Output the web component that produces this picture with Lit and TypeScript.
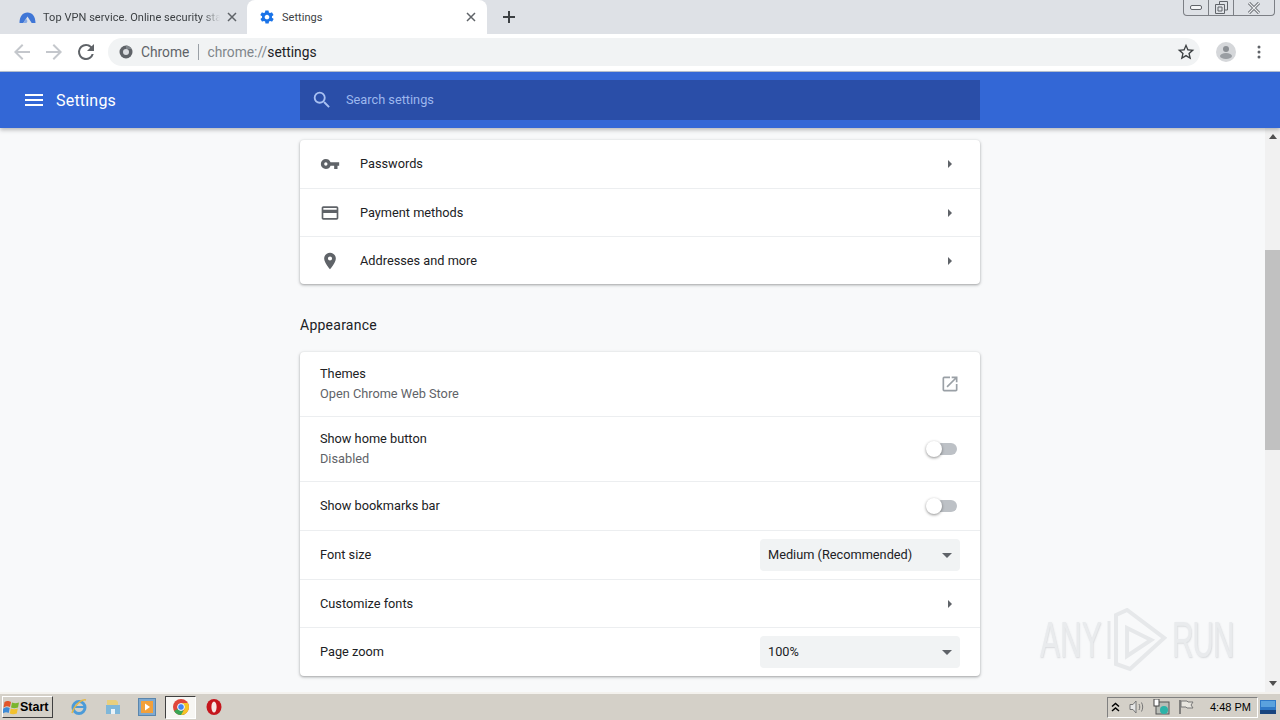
import { LitElement, html, css, svg } from 'lit';
import { customElement } from 'lit/decorators.js';

const icon = (body: unknown, size = 24, vb = 24) => html`<svg width=${size} height=${size} viewBox="0 0 ${vb} ${vb}">${body}</svg>`;

const GEAR = 'M19.4 13c0-.3.1-.6.1-1s0-.7-.1-1l2.1-1.6c.2-.2.2-.4.1-.6l-2-3.5c-.1-.2-.4-.3-.6-.2l-2.5 1c-.5-.4-1.100-.7-1.700-1l-.4-2.600c0-.2-.2-.4-.5-.4h-4c-.2 0-.4.2-.5.4l-.4 2.600c-.6.3-1.200.6-1.700 1l-2.500-1c-.2-.1-.5 0-.6.2l-2 3.500c-.1.2-.1.5.1.6L4.600 11c0 .3-.1.700-.1 1s0 .7.1 1l-2.100 1.600c-.2.2-.2.4-.1.6l2 3.500c.1.2.4.3.6.2l2.500-1c.5.4 1.100.7 1.700 1l.4 2.600c0 .2.2.4.5.4h4c.2 0 .5-.2.5-.4l.4-2.600c.6-.3 1.200-.6 1.700-1l2.500 1c.2.1.5 0 .6-.2l2-3.500c.1-.2.1-.5-.1-.6L19.400 13zM12 15.500c-1.900 0-3.500-1.600-3.500-3.500s1.600-3.500 3.500-3.500 3.500 1.600 3.500 3.500-1.600 3.500-3.500 3.500z';

@customElement('app-root')
export class AppRoot extends LitElement {
  static styles = css`
    :host {
      display: block;
      width: 1280px;
      height: 720px;
      overflow: hidden;
      position: relative;
      font-family: Roboto, 'Liberation Sans', sans-serif;
      font-size: 12.750px;
      color: #202124;
    }

    .page { display: flex; flex-direction: column; height: 720px; }

    /* tab strip */
    .tabstrip {
      height: 34px;
      background: #dee1e6;
      display: flex;
      align-items: flex-end;
      padding-left: 8px;
      position: relative;
      flex: none;
    }
    .tab {
      width: 235px;
      height: 34px;
      display: flex;
      align-items: center;
      font-size: 11px;
      letter-spacing: .05px;
      color: #3c4043;
      padding-left: 11px;
      box-sizing: border-box;
    }
    .tab.active {
      width: 240px;
      margin-left: 4px;
      background: #fff;
      border-radius: 8px 8px 0 0;
      padding-left: 12px;
    }
    .tab .title { margin: 0 7px; width: 177px; white-space: nowrap; -webkit-mask-image: linear-gradient(90deg, #000 90%, transparent); }
    .tab.active .title { margin: 0 0 0 7px; width: 184px; -webkit-mask-image: none; }
    .tab svg { flex: none; }
    .newtab { margin: 0 0 0 16px; align-self: center; display: flex; }
    .winctl {
      position: absolute;
      top: 0;
      left: 1183px;
      width: 92px;
      height: 16px;
      box-sizing: border-box;
      border: 1px solid #7c7f85;
      border-top: none;
      border-radius: 0 0 4px 4px;
      display: grid;
      grid-template-columns: 25px 25px 1fr;
    }
    .winctl div { display: flex; align-items: center; justify-content: center; border-right: 1px solid #7c7f85; }
    .winctl div:last-child { border-right: none; }

    /* toolbar */
    .toolbar {
      height: 36px;
      padding: 0 0 1px 10px;
      background: #fff;
      display: flex;
      align-items: center;
      flex: none;
      border-bottom: 1px solid #b9c3d3;
    }
    .navbtn { width: 24px; height: 24px; margin-right: 8px; display: flex; }
    .omnibox {
      width: 1092px;
      height: 28px;
      margin-left: 2px;
      border-radius: 14px;
      background: #f1f3f4;
      display: flex;
      align-items: center;
      box-sizing: border-box;
      padding-left: 11px;
      font-size: 13.800px;
      color: #5f6368;
    }
    .omnibox .secure { margin-right: 8px; }
    .omnibox .sep { width: 1px; height: 16px; background: #9aa0a6; margin: 0 8px 0 9px; }
    .omnibox .path { color: #80868b; }
    .omnibox .path b { font-weight: 400; color: #202124; }
    .omnibox .star { margin-left: auto; margin-right: 4px; display: flex; }
    .avatar { margin-left: 16px; display: flex; }
    .dots { margin-left: 21px; display: flex; }

    /* settings header */
    .header {
      height: 56px;
      background: #3367d6;
      display: grid;
      grid-template-columns: 300px 680px;
      align-items: center;
      color: #fff;
      flex: none;
      box-shadow: 0 2px 4px rgba(60, 64, 67, .35);
      position: relative;
      z-index: 1;
    }
    .brand { display: flex; align-items: center; padding-left: 22px; font-size: 16px; letter-spacing: .2px; gap: 10px; }
    .search {
      height: 40px;
      background: #2a4ea8;
      display: flex;
      align-items: center;
      padding-left: 11px;
      gap: 13px;
      color: #9db8ee;
      font-size: 12.750px;
    }
    .search span { padding-bottom: 2px; }

    /* content */
    .main { flex: 1; display: flex; min-height: 0; background: #f8f9fa; }
    .content { flex: 1; padding: 12px 0 0 300px; box-sizing: border-box; overflow: hidden; }
    .column { width: 680px; }
    .card {
      background: #fff;
      border-radius: 4px;
      box-shadow: 0 1px 2px rgba(60, 64, 67, .3), 0 1px 3px 1px rgba(60, 64, 67, .15);
    }
    .row {
      display: flex;
      align-items: center;
      padding: 0 20px;
      min-height: 47px;
      border-top: 1px solid #eceef0;
    }
    .row:first-child { border-top: none; min-height: 48px; }
    .nav .row:first-child { min-height: 47px; padding-bottom: 1px; }
    .row.tall { min-height: 48px; }
    .row.two { min-height: 64px; }
    .row.tall .grow, .row.two .grow { padding-bottom: 2px; }
    .row .ic { width: 20px; height: 20px; margin-right: 20px; display: flex; }
    .row .grow { flex: 1; }
    .sub { color: #5f6368; margin-top: 5px; }
    .section { font-size: 14px; color: #202124; letter-spacing: .25px; margin: 33px 0 18px; line-height: 17px; }
    .arrow { width: 0; height: 0; border-left: 4px solid #5f6368; border-top: 4px solid transparent; border-bottom: 4px solid transparent; margin-right: 8px; }
    .toggle { width: 32px; height: 12px; margin-right: 3px; position: relative; display: flex; justify-content: flex-end; }
    .toggle .track { width: 26px; height: 12px; border-radius: 6px; background: #bdc1c6; }
    .toggle .knob {
      position: absolute;
      left: 1px;
      top: -2px;
      width: 16px;
      height: 16px;
      border-radius: 50%;
      background: #fff;
      box-shadow: 0 1px 3px rgba(0, 0, 0, .45);
    }
    .select {
      width: 200px;
      height: 32px;
      background: #f1f3f4;
      border-radius: 4px;
      display: flex;
      align-items: center;
      justify-content: space-between;
      padding: 0 8px;
      box-sizing: border-box;
    }
    .select span { padding-bottom: 1px; }
    .select i { width: 0; height: 0; border-top: 5px solid #5f6368; border-left: 5px solid transparent; border-right: 5px solid transparent; }

    /* scrollbar */
    .scrollbar { width: 15px; background: #f1f1f1; display: flex; flex-direction: column; align-items: center; flex: none; }
    .scrollbar .up, .scrollbar .down { height: 17px; flex: none; display: flex; align-items: center; justify-content: center; }
    .scrollbar .up i { border-bottom: 5px solid #505050; border-left: 4px solid transparent; border-right: 4px solid transparent; }
    .scrollbar .down i { border-top: 5px solid #505050; border-left: 4px solid transparent; border-right: 4px solid transparent; }
    .scrollbar .thumb { width: 100%; height: 200px; background: #c1c1c1; margin-top: 105px; }
    .scrollbar .rest { flex: 1; }

    /* watermark */
    .watermark {
      position: absolute;
      left: 1040px;
      top: 608px;
      display: flex;
      align-items: center;
      font-family: 'Liberation Sans', sans-serif;
      font-size: 50px;
      line-height: 64px;
      color: #e9ebed;
      text-shadow: 1px 1px 2px rgba(120, 125, 130, .25);
      pointer-events: none;
      transform: scaleX(.6);
      transform-origin: left center;
      white-space: nowrap;
    }
    .watermark svg { margin: 0 8px 0 7px; }
    .watermark .run { letter-spacing: -2px; }

    /* taskbar */
    .taskbar {
      height: 28px;
      flex: none;
      background: #d4d0c8;
      border-top: 2px solid #f4f2ee;
      box-sizing: border-box;
      display: flex;
      align-items: center;
      font-family: 'Liberation Sans', sans-serif;
    }
    .start {
      margin-left: 2px;
      width: 51px;
      height: 22px;
      box-sizing: border-box;
      border: 1px solid;
      border-color: #fff #404040 #404040 #fff;
      display: flex;
      align-items: center;
      font-weight: 700;
      font-size: 12.500px;
      color: #000;
    }
    .task { display: flex; margin-left: 16px; }
    .task.first { margin-left: 17px; }
    .task.opera { margin-left: 10px; }
    .task.pressed {
      width: 31px;
      height: 23px;
      margin-left: 9px;
      background: #f7f6f3;
      box-sizing: border-box;
      border: 1px solid;
      border-color: #404040 #fff #fff #404040;
      align-items: center;
      justify-content: center;
    }
    .tray {
      margin-left: auto;
      width: 151px;
      height: 21px;
      box-sizing: border-box;
      border: 1px solid;
      border-color: #808080 #fff #fff #808080;
      display: flex;
      align-items: center;
      padding-left: 3px;
      gap: 8px;
      font-size: 11px;
      color: #000;
    }
    .tray .speaker { margin-left: 1px; }
    .tray .clock { margin-left: 8px; }
    .showdesk { margin-right: 2px; width: 20px; display: flex; justify-content: center; }
  `;

  private row(icon_: unknown, label: string) {
    return html`<div class="row">
      <span class="ic">${icon_}</span>
      <span class="grow">${label}</span>
      <span class="arrow"></span>
    </div>`;
  }

  private toggleRow(label: string, sub?: string) {
    return html`<div class="row tall ${sub ? 'two' : ''}">
      <div class="grow">
        <div>${label}</div>
        ${sub ? html`<div class="sub">${sub}</div>` : ''}
      </div>
      <div class="toggle"><div class="track"></div><div class="knob"></div></div>
    </div>`;
  }

  private selectRow(label: string, value: string) {
    return html`<div class="row tall">
      <span class="grow">${label}</span>
      <div class="select"><span>${value}</span><i></i></div>
    </div>`;
  }

  render() {
    const close = html`<svg width="10" height="10" viewBox="0 0 10 10"><path d="M1 1l8 8M9 1l-8 8" stroke="#5f6368" stroke-width="1.500"/></svg>`;
    return html`<div class="page">
      <div class="tabstrip">
        <div class="tab">
          <svg width="17" height="17" viewBox="0 0 17 17"><path d="M.5 14C.5 7.500 3.800 3.500 8.500 3.500S16.500 7.500 16.500 14h-3.800L8.500 7.500 4.300 14z" fill="#3f76d6"/><path d="M4.300 14L7 9.500l1.500 2.500-1 2z" fill="#86a9e4"/></svg>
          <span class="title">Top VPN service. Online security sta</span>
          ${close}
        </div>
        <div class="tab active">
          ${icon(svg`<path d=${GEAR} fill="#1a73e8"/>`, 16)}
          <span class="title">Settings</span>
          ${close}
        </div>
        <span class="newtab"><svg width="12" height="12" viewBox="0 0 12 12"><path d="M6 0v12M0 6h12" stroke="#3c4043" stroke-width="2"/></svg></span>
        <div class="winctl">
          <div><svg width="12" height="6" viewBox="0 0 12 6"><rect x=".5" y=".5" width="11" height="4" rx="1.500" fill="#f4f5f7" stroke="#60646a"/></svg></div>
          <div><svg width="13" height="13" viewBox="0 0 13 13"><path d="M4.500 3V.5h8V9H10M.5 3.500h9v9h-9zM3 6h4v4H3z" fill="none" stroke="#60646a"/></svg></div>
          <div><svg width="14" height="12" viewBox="0 0 14 12"><path d="M2 1l10 10M12 1L2 11" stroke="#60646a" stroke-width="3"/><path d="M2 1l10 10M12 1L2 11" stroke="#eceef0" stroke-width="1.200"/></svg></div>
        </div>
      </div>

      <div class="toolbar">
        <span class="navbtn">${icon(svg`<path d="M20 11H7.800l5.600-5.600L12 4l-8 8 8 8 1.400-1.400L7.800 13H20z" fill="#c4c7cc"/>`)}</span>
        <span class="navbtn">${icon(svg`<path d="M12 4l-1.400 1.400 5.600 5.600H4v2h12.200l-5.600 5.600L12 20l8-8z" fill="#c4c7cc"/>`)}</span>
        <span class="navbtn">${icon(svg`<path d="M17.650 6.350A7.960 7.960 0 0 0 12 4a8 8 0 1 0 7.730 10h-2.080A6 6 0 1 1 12 6c1.660 0 3.140.69 4.220 1.780L13 11h7V4z" fill="#5f6368"/>`)}</span>
        <div class="omnibox">
          <svg class="secure" width="14" height="14" viewBox="0 0 14 14"><circle cx="7" cy="7" r="6.500" fill="#5f6368"/><circle cx="7" cy="7" r="3" fill="#dadce0"/><path d="M7 .5A6.500 6.500 0 0 1 12.700 4H7z" fill="#80868b"/></svg>
          <span>Chrome</span>
          <span class="sep"></span>
          <span class="path">chrome://<b>settings</b></span>
          <span class="star">${icon(svg`<path d="M22 9.240l-7.190-.62L12 2 9.190 8.630 2 9.240l5.460 4.730L5.820 21 12 17.270 18.180 21l-1.630-7.030L22 9.240zM12 15.400l-3.760 2.270 1-4.280-3.320-2.880 4.380-.38L12 6.100l1.710 4.040 4.380.38-3.320 2.880 1 4.280L12 15.400z" fill="#3c4043"/>`, 20)}</span>
        </div>
        <span class="avatar"><svg width="20" height="20" viewBox="0 0 20 20"><circle cx="10" cy="10" r="10" fill="#d5d7da"/><circle cx="10" cy="7" r="3" fill="#8b8f94"/><ellipse cx="10" cy="14" rx="6" ry="3" fill="#9a9ea3"/></svg></span>
        <span class="dots"><svg width="4" height="14" viewBox="0 0 4 14"><circle cx="2" cy="2" r="1.500" fill="#5f6368"/><circle cx="2" cy="7" r="1.500" fill="#5f6368"/><circle cx="2" cy="12" r="1.500" fill="#5f6368"/></svg></span>
      </div>

      <div class="header">
        <div class="brand">
          ${icon(svg`<path d="M3 18h18v-2H3v2zm0-5h18v-2H3v2zm0-7v2h18V6H3z" fill="#fff"/>`)}
          <span>Settings</span>
        </div>
        <div class="search">
          ${icon(svg`<path d="M15.500 14h-.79l-.28-.27A6.470 6.470 0 0 0 16 9.500 6.500 6.500 0 1 0 9.500 16c1.610 0 3.090-.59 4.230-1.570l.27.28v.79l5 4.990L20.490 19l-4.990-5zm-6 0C7.010 14 5 11.990 5 9.500S7.010 5 9.500 5 14 7.010 14 9.500 11.990 14 9.500 14z" fill="#a9c1f2"/>`, 22)}
          <span>Search settings</span>
        </div>
      </div>

      <div class="main">
        <div class="content">
          <div class="column">
            <div class="card nav">
              ${this.row(icon(svg`<path d="M12.650 10A6 6 0 0 0 7 6a6 6 0 0 0 0 12 6 6 0 0 0 5.650-4H17v4h4v-4h2v-4H12.650zM7 14a2 2 0 1 1 0-4 2 2 0 0 1 0 4z" fill="#5f6368"/>`, 20), 'Passwords')}
              ${this.row(icon(svg`<path d="M20 4H4c-1.110 0-2 .89-2 2v12c0 1.110.89 2 2 2h16c1.110 0 2-.89 2-2V6c0-1.110-.89-2-2-2zm0 14H4v-6h16v6zm0-10H4V6h16v2z" fill="#5f6368"/>`, 20), 'Payment methods')}
              ${this.row(icon(svg`<path d="M12 2C8.130 2 5 5.130 5 9c0 5.250 7 13 7 13s7-7.750 7-13c0-3.870-3.130-7-7-7zm0 9.500a2.500 2.500 0 0 1 0-5 2.500 2.500 0 0 1 0 5z" fill="#5f6368"/>`, 20), 'Addresses and more')}
            </div>
            <div class="section">Appearance</div>
            <div class="card">
              <div class="row two">
                <div class="grow"><div>Themes</div><div class="sub">Open Chrome Web Store</div></div>
                ${icon(svg`<path d="M19 19H5V5h7V3H5a2 2 0 0 0-2 2v14a2 2 0 0 0 2 2h14c1.100 0 2-.9 2-2v-7h-2v7zM14 3v2h3.590l-9.830 9.830 1.410 1.410L19 6.410V10h2V3h-7z" fill="#9aa0a6"/>`, 20)}
              </div>
              ${this.toggleRow('Show home button', 'Disabled')}
              ${this.toggleRow('Show bookmarks bar')}
              ${this.selectRow('Font size', 'Medium (Recommended)')}
              <div class="row"><span class="grow">Customize fonts</span><span class="arrow"></span></div>
              ${this.selectRow('Page zoom', '100%')}
            </div>
          </div>
        </div>
        <div class="scrollbar">
          <div class="up"><i></i></div>
          <div class="thumb"></div>
          <div class="rest"></div>
          <div class="down"><i></i></div>
        </div>
      </div>

      <div class="taskbar">
        <div class="start">
          <svg width="17" height="17" viewBox="0 0 17 17"><path d="M1.500 3c3-1.500 4-1 6.500 0L7 8C4.500 7 3.500 7 .5 8.500z" fill="#e2562a"/><path d="M9 3.500c2.500 1 4 1 7 0l-1 5c-3 1-4.500 1-7 0z" fill="#7ab52f"/><path d="M.3 9.500c3-1.500 4-1.500 6.400-.5l-1 5C3.500 13 2.500 13 -.7 14.500z" fill="#3d8ad6"/><path d="M7.800 9.500c2.500 1 4 1 7 0l-1 5c-3 1-4.500 1-7 0z" fill="#f2c12e"/></svg>
          <span>Start</span>
        </div>
        <span class="task first"><svg width="18" height="18" viewBox="0 0 18 18"><circle cx="9" cy="9.500" r="6" fill="none" stroke="#4c9bd8" stroke-width="3"/><path d="M3 9h12" stroke="#4c9bd8" stroke-width="2"/><path d="M2 15C5 6 12 1 16 2" fill="none" stroke="#e4b84a" stroke-width="1.500"/></svg></span>
        <span class="task"><svg width="18" height="18" viewBox="0 0 18 18"><path d="M3 2h9l2 2v4H3z" fill="#e8cf7d"/><path d="M2 7h14v9H2z" fill="#7fb7d9"/><path d="M7 11h4v5H7z" fill="#eaf3f8"/></svg></span>
        <span class="task"><svg width="18" height="18" viewBox="0 0 18 18"><rect x=".5" y=".5" width="17" height="17" fill="#7fa9cf" stroke="#5a86ad"/><rect x="3" y="3" width="12" height="12" fill="#f2a03a"/><path d="M7 5.500l5 3.500-5 3.500z" fill="#fff"/></svg></span>
        <span class="task pressed"><svg width="16" height="16" viewBox="0 0 16 16"><circle cx="8" cy="8" r="8" fill="#e0463a"/><path d="M8 8L1.100 12A8 8 0 0 0 8 16a8 8 0 0 0 4-1.100z" fill="#3aa655"/><path d="M8 4h6.900A8 8 0 0 1 8 16l3.500-6z" fill="#f6c426"/><circle cx="8" cy="8" r="3.400" fill="#4285f4" stroke="#fff"/></svg></span>
        <span class="task opera"><svg width="16" height="16" viewBox="0 0 16 16"><ellipse cx="8" cy="8" rx="7.500" ry="8" fill="#c5161d"/><ellipse cx="8" cy="8" rx="2.600" ry="5.500" fill="#f6e9e6"/></svg></span>

        <div class="tray">
          <svg width="9" height="10" viewBox="0 0 9 10"><path d="M1 4.500l3.500-3 3.500 3M1 9l3.500-3L8 9" fill="none" stroke="#000" stroke-width="1.500"/></svg>
          <svg class="speaker" width="16" height="16" viewBox="0 0 16 16"><path d="M1 5.500h3L7 2v12l-3-3.500H1z" fill="#e6e6e6" stroke="#777"/><path d="M10 5c1 2 1 4 0 6M12.500 3.500c1.600 3 1.600 6 0 9" fill="none" stroke="#777"/></svg>
          <svg width="17" height="16" viewBox="0 0 17 16"><rect x="3" y="3" width="13" height="12" fill="#b9bdb7" stroke="#555"/><rect x="1" y="0" width="5" height="7" fill="#fff" stroke="#444"/><circle cx="11" cy="11" r="4" fill="#2cb3a8"/></svg>
          <svg width="16" height="16" viewBox="0 0 16 16"><path d="M2 1v14" stroke="#666" stroke-width="1.500"/><path d="M3 2h6l1 1h5l-2 3 2 3H9L8 8H3z" fill="#e8e6df" stroke="#777"/></svg>
          <span class="clock">4:48 PM</span>
        </div>
        <span class="showdesk"><svg width="16" height="14" viewBox="0 0 16 14"><rect width="16" height="14" fill="#2f79c7"/><rect y="10" width="16" height="4" fill="#17447e"/><rect x="1" y="1" width="14" height="6" fill="#5aa2de"/></svg></span>
      </div>

      <div class="watermark">
        <span>ANY</span>
        <svg width="102" height="64" viewBox="0 0 61 64" preserveAspectRatio="none"><path d="M10 7L21 2l37 28-34 31-14-5zM21 20l24 12-24 16z" fill="none" stroke="#e6e8ea" stroke-width="4"/><path d="M3 13v38" stroke="#e6e8ea" stroke-width="3"/></svg>
        <span class="run">RUN</span>
      </div>
    </div>`;
  }
}
